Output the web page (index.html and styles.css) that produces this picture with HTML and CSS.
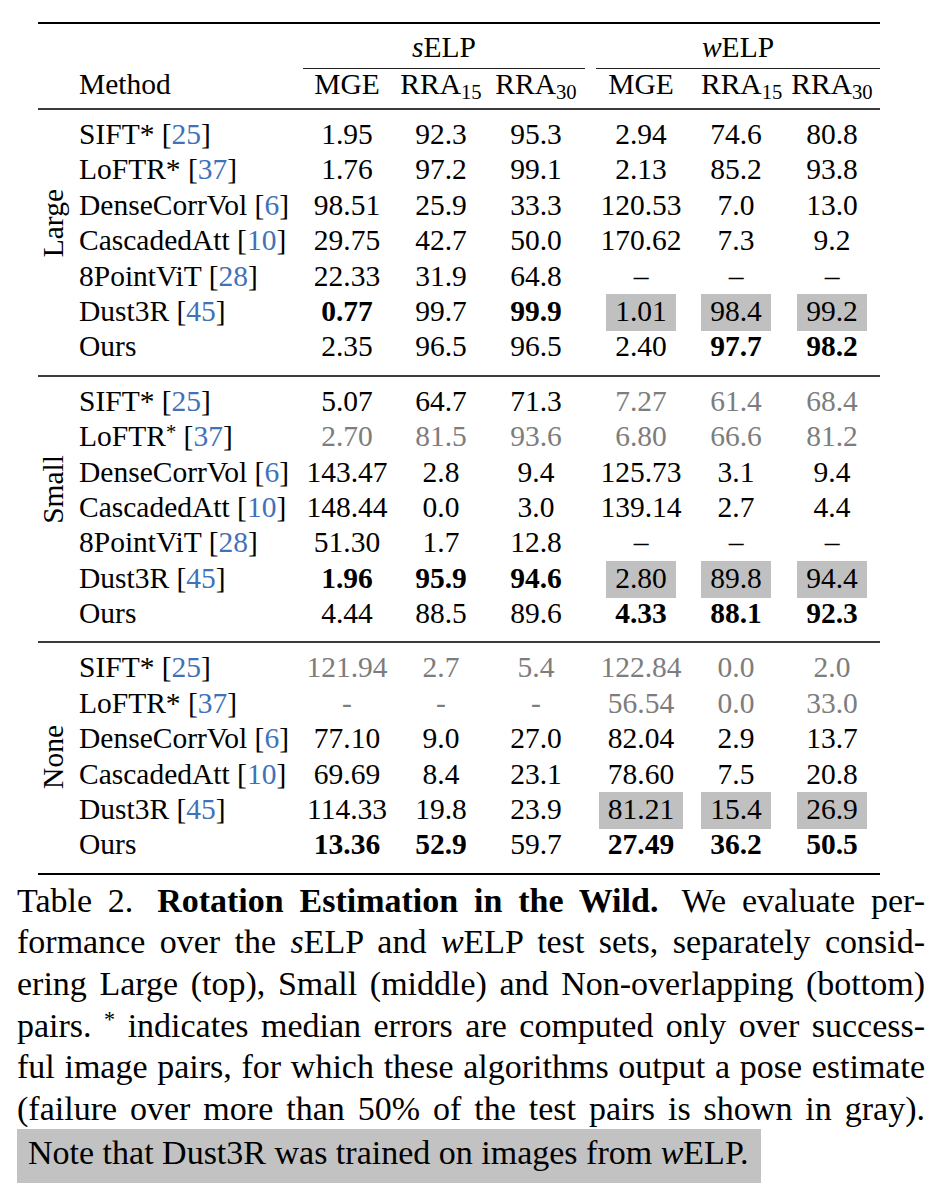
FILE: index.html
```html
<!DOCTYPE html>
<html lang="en">
<head>
<meta charset="utf-8">
<title>Table 2. Rotation Estimation in the Wild</title>
<link rel="stylesheet" href="styles.css">
</head>
<body>
<figure class="fig">
  <div class="tbl">
    <div class="thead">
      <div class="grp-row">
        <span></span><span></span>
        <div class="grp"><i>s</i>ELP</div>
        <span></span>
        <div class="grp"><i>w</i>ELP</div>
      </div>
      <div class="hdr-row">
        <span></span>
        <span class="mcol">Method</span>
        <span>MGE</span><span>RRA<sub>15</sub></span><span>RRA<sub>30</sub></span>
        <span>MGE</span><span>RRA<sub>15</sub></span><span>RRA<sub>30</sub></span>
      </div>
    </div>

    <div class="sec">
      <div class="sec-label skip"><span>Large</span></div>
      <div class="sec-rows">
        <div class="row"><span class="mcol">SIFT* [<span class="cite">25</span>]</span><span>1.95</span><span>92.3</span><span>95.3</span><span>2.94</span><span>74.6</span><span>80.8</span></div>
        <div class="row"><span class="mcol">LoFTR* [<span class="cite">37</span>]</span><span>1.76</span><span>97.2</span><span>99.1</span><span>2.13</span><span>85.2</span><span>93.8</span></div>
        <div class="row"><span class="mcol">DenseCorrVol [<span class="cite">6</span>]</span><span>98.51</span><span>25.9</span><span>33.3</span><span>120.53</span><span>7.0</span><span>13.0</span></div>
        <div class="row"><span class="mcol">CascadedAtt [<span class="cite">10</span>]</span><span>29.75</span><span>42.7</span><span>50.0</span><span>170.62</span><span>7.3</span><span>9.2</span></div>
        <div class="row"><span class="mcol">8PointViT [<span class="cite">28</span>]</span><span>22.33</span><span>31.9</span><span>64.8</span><span>–</span><span>–</span><span>–</span></div>
        <div class="row"><span class="mcol">Dust3R [<span class="cite">45</span>]</span><span class="b">0.77</span><span>99.7</span><span class="b">99.9</span><span><span class="hl">1.01</span></span><span><span class="hl">98.4</span></span><span><span class="hl">99.2</span></span></div>
        <div class="row"><span class="mcol">Ours</span><span>2.35</span><span>96.5</span><span>96.5</span><span>2.40</span><span class="b">97.7</span><span class="b">98.2</span></div>
      </div>
    </div>

    <div class="sec">
      <div class="sec-label skip"><span>Small</span></div>
      <div class="sec-rows">
        <div class="row"><span class="mcol">SIFT* [<span class="cite">25</span>]</span><span>5.07</span><span>64.7</span><span>71.3</span><span class="g">7.27</span><span class="g">61.4</span><span class="g">68.4</span></div>
        <div class="row"><span class="mcol">LoFTR<sup>*</sup> [<span class="cite">37</span>]</span><span class="g">2.70</span><span class="g">81.5</span><span class="g">93.6</span><span class="g">6.80</span><span class="g">66.6</span><span class="g">81.2</span></div>
        <div class="row"><span class="mcol">DenseCorrVol [<span class="cite">6</span>]</span><span>143.47</span><span>2.8</span><span>9.4</span><span>125.73</span><span>3.1</span><span>9.4</span></div>
        <div class="row"><span class="mcol">CascadedAtt [<span class="cite">10</span>]</span><span>148.44</span><span>0.0</span><span>3.0</span><span>139.14</span><span>2.7</span><span>4.4</span></div>
        <div class="row"><span class="mcol">8PointViT [<span class="cite">28</span>]</span><span>51.30</span><span>1.7</span><span>12.8</span><span>–</span><span>–</span><span>–</span></div>
        <div class="row"><span class="mcol">Dust3R [<span class="cite">45</span>]</span><span class="b">1.96</span><span class="b">95.9</span><span class="b">94.6</span><span><span class="hl">2.80</span></span><span><span class="hl">89.8</span></span><span><span class="hl">94.4</span></span></div>
        <div class="row"><span class="mcol">Ours</span><span>4.44</span><span>88.5</span><span>89.6</span><span class="b">4.33</span><span class="b">88.1</span><span class="b">92.3</span></div>
      </div>
    </div>

    <div class="sec last">
      <div class="sec-label"><span>None</span></div>
      <div class="sec-rows">
        <div class="row"><span class="mcol">SIFT* [<span class="cite">25</span>]</span><span class="g">121.94</span><span class="g">2.7</span><span class="g">5.4</span><span class="g">122.84</span><span class="g">0.0</span><span class="g">2.0</span></div>
        <div class="row"><span class="mcol">LoFTR* [<span class="cite">37</span>]</span><span class="g">-</span><span class="g">-</span><span class="g">-</span><span class="g">56.54</span><span class="g">0.0</span><span class="g">33.0</span></div>
        <div class="row"><span class="mcol">DenseCorrVol [<span class="cite">6</span>]</span><span>77.10</span><span>9.0</span><span>27.0</span><span>82.04</span><span>2.9</span><span>13.7</span></div>
        <div class="row"><span class="mcol">CascadedAtt [<span class="cite">10</span>]</span><span>69.69</span><span>8.4</span><span>23.1</span><span>78.60</span><span>7.5</span><span>20.8</span></div>
        <div class="row"><span class="mcol">Dust3R [<span class="cite">45</span>]</span><span>114.33</span><span>19.8</span><span>23.9</span><span><span class="hl wide">81.21</span></span><span><span class="hl">15.4</span></span><span><span class="hl">26.9</span></span></div>
        <div class="row"><span class="mcol">Ours</span><span class="b">13.36</span><span class="b">52.9</span><span>59.7</span><span class="b">27.49</span><span class="b">36.2</span><span class="b">50.5</span></div>
      </div>
    </div>
  </div>

  <figcaption class="cap">
    <span class="ln">Table 2.<span class="gap"></span> <b>Rotation Estimation in the Wild.</b><span class="gap"></span> We evaluate per-</span>
    <span class="ln">formance over the <i>s</i>ELP and <i>w</i>ELP test sets, separately consid-</span>
    <span class="ln">ering Large (top), Small (middle) and Non-overlapping (bottom)</span>
    <span class="ln">pairs. <sup>*</sup> indicates median errors are computed only over success-</span>
    <span class="ln">ful image pairs, for which these algorithms output a pose estimate</span>
    <span class="ln">(failure over more than 50% of the test pairs is shown in gray).</span>
    <span class="note">Note that Dust3R was trained on images from <i>w</i>ELP.</span>
  </figcaption>
</figure>
</body>
</html>
```

FILE: styles.css
```css
* {
  box-sizing: border-box;
  margin: 0;
  padding: 0;
}

body {
  background: #ffffff;
  color: #000000;
  font-family: "Liberation Serif", "Times New Roman", serif;
}

.fig {
  width: 948px;
  padding-left: 17px;
}

/* ---------- table ---------- */
.tbl {
  width: 842px;
  margin-left: 21px;
  margin-top: 22px;
  font-size: 29.5px;
  border-top: 2px solid #000;
  border-bottom: 2px solid #000;
}

.thead {
  padding-top: 8px;
  padding-bottom: 9px;
  border-bottom: 2px solid #3c3c3c;
}

.grp-row {
  display: grid;
  grid-template-columns: 32px 233px 282px 11px 284px;
  line-height: 30px;
}

.grp {
  text-align: center;
  padding-bottom: 6px;
  border-bottom: 1px solid #222;
}

.hdr-row {
  display: grid;
  grid-template-columns: 32px 233px 88px 100px 90px 120px 70px 109px;
  line-height: 30px;
}

.hdr-row > span,
.row > span {
  text-align: center;
  white-space: nowrap;
}

.hdr-row > span:last-child,
.row > span:last-child {
  padding-left: 13px;
}

.hdr-row > .mcol,
.row > .mcol {
  text-align: left;
  padding-left: 9px;
}

sub {
  font-size: 0.7em;
  line-height: 0;
  vertical-align: -0.22em;
}

.sec {
  display: flex;
  padding-top: 7px;
  padding-bottom: 10px;
  border-bottom: 2px solid #3c3c3c;
}

.sec.last {
  border-bottom: none;
}

.sec-label {
  width: 32px;
  display: flex;
  align-items: center;
  justify-content: center;
}

.sec-label.skip {
  padding-bottom: 35.4px;
}

.sec-label span {
  writing-mode: vertical-rl;
  transform: rotate(180deg);
  line-height: 1;
  white-space: nowrap;
}

.sec-rows {
  width: 810px;
}

.row {
  display: grid;
  grid-template-columns: 233px 88px 100px 90px 120px 70px 109px;
  height: 35.4px;
  line-height: 35.4px;
}

.row sup {
  font-size: 0.7em;
  line-height: 0;
  vertical-align: 0.35em;
}

.cite {
  color: #3f72b9;
}

.g {
  color: #7d7d7d;
}

.b {
  font-weight: bold;
}

.hl {
  display: inline-block;
  width: 70px;
  height: 37px;
  background: #c0c0c0;
  vertical-align: top;
}

.hl.wide {
  width: 84px;
}

/* ---------- caption ---------- */
.cap {
  width: 908px;
  margin-top: 5px;
  font-size: 34px;
  line-height: 41.6px;
}

.cap .ln {
  display: block;
  text-align: justify;
  text-align-last: justify;
}

.cap .gap {
  display: inline-block;
  width: 8px;
}

.cap sup {
  font-size: 0.65em;
  line-height: 0;
  vertical-align: 0.45em;
}

.note {
  display: block;
  width: max-content;
  background: #c2c2c2;
  padding: 3px 12px 9px 11px;
}
```
